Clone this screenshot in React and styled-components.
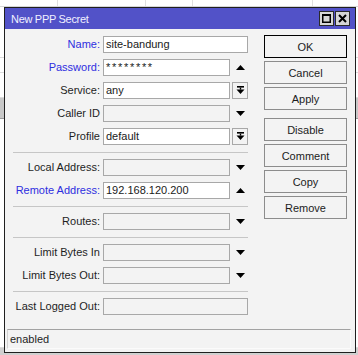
import React from "react";
import styled, { createGlobalStyle } from "styled-components";

const GlobalStyle = createGlobalStyle`
  html, body { margin: 0; padding: 0; background: #fff; }
  body { font-family: "Liberation Sans", Arial, sans-serif; font-size: 11px; }
`;

const Desktop = styled.div`
  position: relative;
  width: 358px;
  height: 355px;
  overflow: hidden;
  background: #fff;
`;

const BgTable = styled.div`
  display: flex;
  flex-direction: column;
  height: 100%;
`;

const BgHeader = styled.div`
  display: grid;
  grid-template-columns: 58px 88px 47px 120px 1fr;
  height: 6px;
  border-bottom: 1px solid #d6d6d6;
`;

const BgCell = styled.div`
  border-right: 1px solid #e0e0e0;
`;

const BgRow = styled.div`
  height: ${(p) => p.$h}px;
  flex: ${(p) => (p.$grow ? 1 : "none")};
  background: ${(p) => p.$bg || "#fff"};
  border-bottom: 1px solid ${(p) => p.$line || "#dcdcdc"};
`;

const Window = styled.div`
  position: absolute;
  left: 4px;
  top: 7px;
  width: 352px;
  height: 346px;
  box-sizing: border-box;
  border: 1px solid #1f1f1f;
  background: #f3f3f3;
  display: flex;
  flex-direction: column;
  color: #1e1e1e;
`;

const TitleBar = styled.div`
  height: 21px;
  background: #5252c8;
  display: flex;
  align-items: center;
  justify-content: space-between;
  padding: 0 5px 0 6px;
`;

const Title = styled.span`
  color: #f0f0ff;
  font-size: 11px;
  letter-spacing: -0.3px;
`;

const TitleButtons = styled.div`
  display: flex;
  gap: 1px;
`;

const TitleButton = styled.div`
  width: 15px;
  height: 15px;
  box-sizing: border-box;
  border: 1px solid #2a2a2a;
  background: #d6d6d6;
  display: flex;
  align-items: center;
  justify-content: center;
`;

const Body = styled.div`
  display: flex;
  gap: 16px;
  padding: 6px 8px 0 8px;
`;

const Form = styled.div`
  width: 235px;
  margin-top: 1px;
  display: flex;
  flex-direction: column;
  gap: 6px;
`;

const Row = styled.div`
  display: grid;
  grid-template-columns: 87px 145px;
  column-gap: 3px;
  height: 17px;
  align-items: center;
`;

const Label = styled.div`
  text-align: right;
  white-space: nowrap;
  line-height: 17px;
  color: ${(p) => (p.$blue ? "#2e2ee0" : "#1e1e1e")};
`;

const FieldWrap = styled.div`
  display: flex;
  gap: 2px;
  height: 17px;
`;

const Field = styled.div`
  flex: 1;
  height: 17px;
  box-sizing: border-box;
  border: 1px solid #a8a8a8;
  background: ${(p) => (p.$empty ? "#f3f3f3" : "#fff")};
  padding: 0 2px;
  line-height: 15px;
  white-space: nowrap;
  overflow: hidden;
  color: #1a1a1a;
  letter-spacing: ${(p) => (p.$secret ? "1.7px" : "normal")};
`;

const IconSlot = styled.div`
  width: 16px;
  height: 17px;
  box-sizing: border-box;
  border: ${(p) => (p.$boxed ? "1px solid #a8a8a8" : "none")};
  display: flex;
  align-items: center;
  justify-content: center;
`;

const Separator = styled.div`
  height: 2px;
  box-sizing: border-box;
  border-bottom: 1px solid #c6c6c6;
`;

const ButtonColumn = styled.div`
  display: flex;
  flex-direction: column;
  gap: 8px;
`;

const ButtonGroup = styled.div`
  display: flex;
  flex-direction: column;
  gap: 3px;
`;

const Button = styled.div`
  width: 83px;
  height: 23px;
  box-sizing: border-box;
  border: 1px solid ${(p) => (p.$default ? "#000" : "#8c8c8c")};
  background: #f3f3f3;
  display: flex;
  align-items: center;
  justify-content: center;
  color: #1c1c1c;
`;

const StatusBar = styled.div`
  margin: auto 4px 3px 2px;
  height: 20px;
  box-sizing: border-box;
  border-top: 1px solid #a2a2a2;
  border-left: 1px solid #d2d2d2;
  border-right: 1px solid #fbfbfb;
  border-bottom: 1px solid #fbfbfb;
  padding-left: 2px;
  line-height: 18px;
  color: #1e1e1e;
`;

const UpArrow = () => (
  <svg width="9" height="5" viewBox="0 0 9 5">
    <polygon points="0,5 9,5 4.5,0" fill="#000" />
  </svg>
);

const DownArrow = () => (
  <svg width="9" height="5" viewBox="0 0 9 5">
    <polygon points="0,0 9,0 4.5,5" fill="#000" />
  </svg>
);

const DropIcon = () => (
  <svg width="9" height="9" viewBox="0 0 9 9">
    <rect x="1" y="0" width="7" height="1.6" fill="#000" />
    <rect x="3.8" y="1.6" width="1.4" height="2" fill="#000" />
    <polygon points="0.5,3.5 8.5,3.5 4.5,8" fill="#000" />
  </svg>
);

const icons = {
  up: <UpArrow />,
  down: <DownArrow />,
  drop: <DropIcon />,
};

const FormRow = ({ label, blue, value, icon, secret }) => (
  <Row>
    <Label $blue={blue}>{label}</Label>
    <FieldWrap>
      <Field $empty={value === undefined} $secret={secret}>{value}</Field>
      {icon && <IconSlot $boxed={icon === "drop"}>{icons[icon]}</IconSlot>}
    </FieldWrap>
  </Row>
);

export default function App() {
  return (
    <Desktop>
      <GlobalStyle />
      <BgTable>
        <BgHeader>
          <BgCell />
          <BgCell />
          <BgCell />
          <BgCell />
          <div />
        </BgHeader>
        <BgRow $h={50} />
        <BgRow $h={14} />
        <BgRow $h={24} />
        <BgRow $h={20} $bg="#c8c8c8" $line="#9a9a9a" />
        <BgRow $grow />
        <BgRow $h={6} $bg="#d0d0d0" $line="#d0d0d0" />
      </BgTable>
      <Window>
        <TitleBar>
          <Title>New PPP Secret</Title>
          <TitleButtons>
            <TitleButton>
              <svg width="9" height="9" viewBox="0 0 9 9">
                <rect x="0.75" y="0.75" width="7.5" height="7.5" fill="none" stroke="#000" strokeWidth="1.5" />
                <rect x="0" y="0" width="9" height="2" fill="#000" />
              </svg>
            </TitleButton>
            <TitleButton>
              <svg width="9" height="9" viewBox="0 0 9 9">
                <path d="M1 1 L8 8 M8 1 L1 8" stroke="#000" strokeWidth="2" />
              </svg>
            </TitleButton>
          </TitleButtons>
        </TitleBar>
        <Body>
          <Form>
            <FormRow label="Name:" blue value="site-bandung" />
            <FormRow label="Password:" blue value="********" secret icon="up" />
            <FormRow label="Service:" value="any" icon="drop" />
            <FormRow label="Caller ID" icon="down" />
            <FormRow label="Profile" value="default" icon="drop" />
            <Separator />
            <FormRow label="Local Address:" icon="down" />
            <FormRow label="Remote Address:" blue value="192.168.120.200" icon="up" />
            <Separator />
            <FormRow label="Routes:" icon="down" />
            <Separator />
            <FormRow label="Limit Bytes In" icon="down" />
            <FormRow label="Limit Bytes Out:" icon="down" />
            <Separator />
            <FormRow label="Last Logged Out:" />
          </Form>
          <ButtonColumn>
            <ButtonGroup>
              <Button $default>OK</Button>
              <Button>Cancel</Button>
              <Button>Apply</Button>
            </ButtonGroup>
            <ButtonGroup>
              <Button>Disable</Button>
              <Button>Comment</Button>
              <Button>Copy</Button>
              <Button>Remove</Button>
            </ButtonGroup>
          </ButtonColumn>
        </Body>
        <StatusBar>enabled</StatusBar>
      </Window>
    </Desktop>
  );
}
